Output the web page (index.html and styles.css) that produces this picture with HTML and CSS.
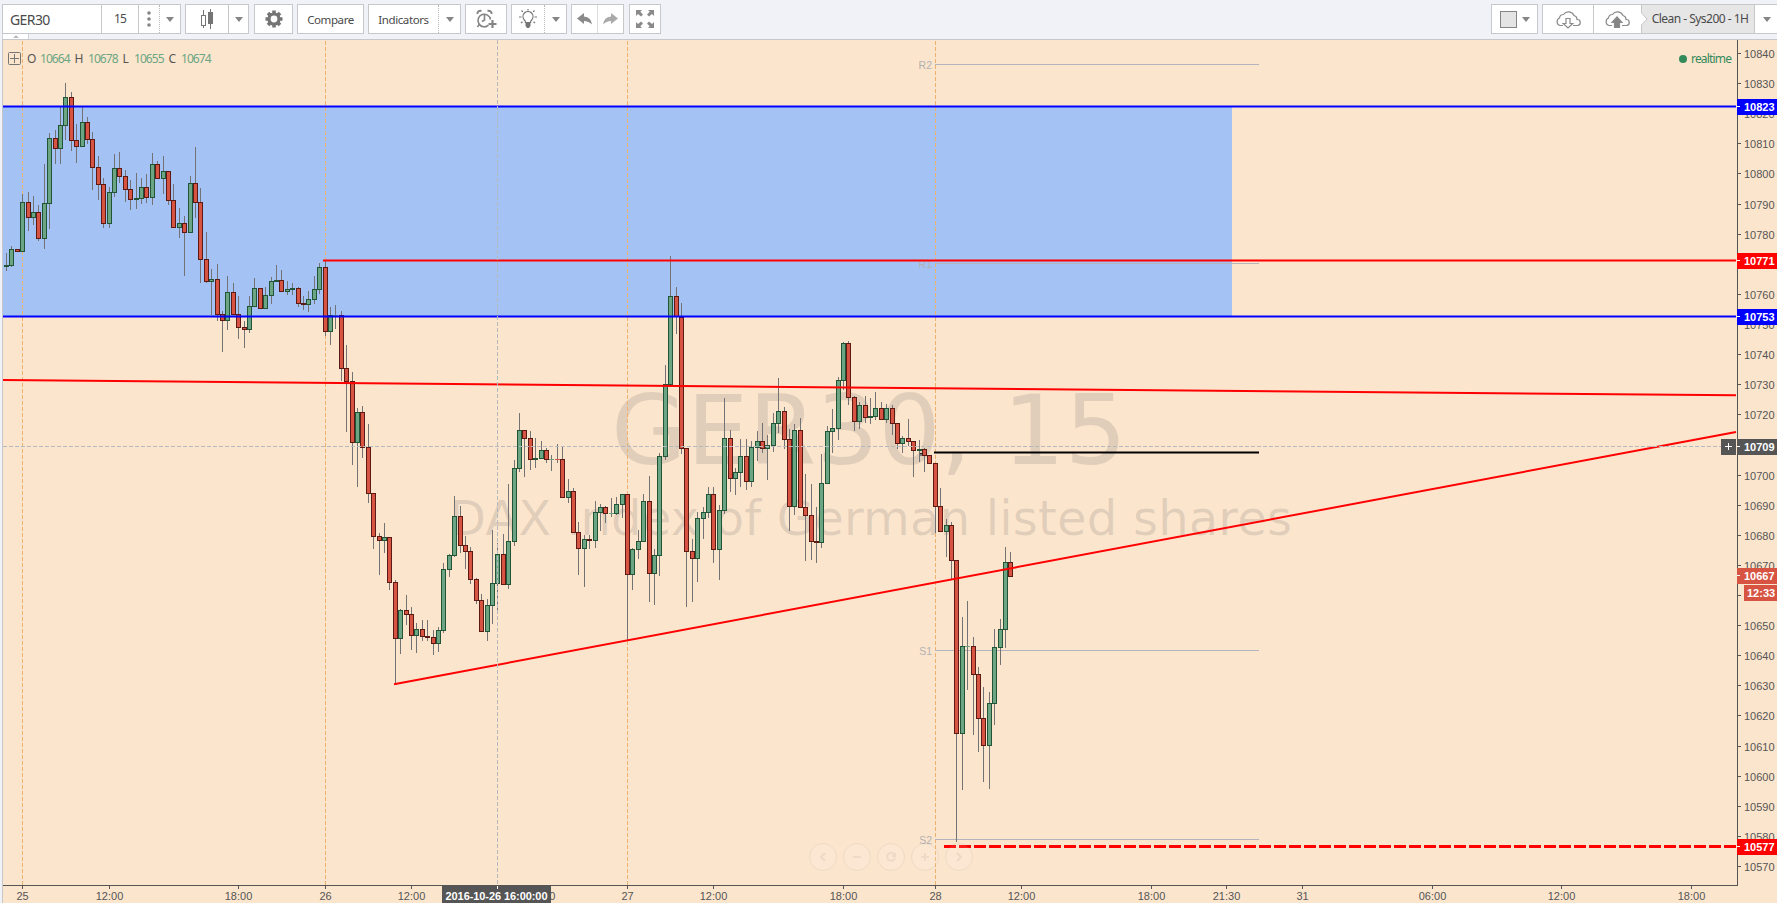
FILE: index.html
```html
<!DOCTYPE html>
<html lang="en">
<head>
<meta charset="utf-8">
<title>GER30, 15</title>
<link rel="stylesheet" href="styles.css">
</head>
<body>
<div class="app">
  <header class="toolbar">
    <div class="group">
      <div class="cell symbol">GER30</div>
      <div class="cell interval sep">15</div>
      <div class="cell dots sep"><svg width="4" height="16"><circle cx="2" cy="2" r="1.8"/><circle cx="2" cy="8" r="1.8"/><circle cx="2" cy="14" r="1.8"/></svg></div>
      <div class="cell drop dotted"><i class="caret"></i></div>
    </div>
    <div class="group style">
      <div class="cell grow"><svg width="14" height="20"><path d="M3.500 1v18M10.500 0v20" stroke="#757575"/><rect x="1.500" y="6.500" width="4" height="10" fill="#fff" stroke="#757575"/><rect x="8" y="3" width="5" height="12" fill="#757575"/></svg></div>
      <div class="cell drop sep"><i class="caret"></i></div>
    </div>
    <div class="group gear"><div class="cell grow"><svg width="18" height="18" viewBox="-9 -9 18 18"><circle r="5" fill="none" stroke="#757575" stroke-width="3.200"/><g fill="#757575"><path id="tooth" d="M-1.800-8.500h3.600v3h-3.600zM-1.800 5.500h3.600v3h-3.600zM-8.500-1.800h3v3.600h-3zM5.500-1.800h3v3.600h-3z"/><use href="#tooth" transform="rotate(45)"/></g></svg></div></div>
    <div class="group compare"><div class="cell grow label">Compare</div></div>
    <div class="group indicators"><div class="cell grow label">Indicators</div><div class="cell drop dotted"><i class="caret"></i></div></div>
    <div class="group alarm"><div class="cell grow"><svg width="21" height="20" fill="none" stroke="#858585" stroke-width="1.600"><path d="M12.500 16.200A6.300 6.300 0 1 1 14.500 10.500M8.500 6v5l-2.500 1.500M3.500 15l-2 3"/><path d="M1.500 5Q1 1.500 5.500 1.700M15.500 5Q16 1.500 11.500 1.700" stroke-width="2"/><path d="M16.500 11v8M12.500 15h8" stroke-width="2.200"/></svg></div></div>
    <div class="group bulb"><div class="cell grow"><svg width="18" height="20" fill="none" stroke="#757575" stroke-width="1.200"><path d="M6.500 13.500Q6.500 12 5 10.500A5 5 0 1 1 13 10.500Q11.500 12 11.500 13.500Z"/><path d="M6.500 14h5v3l-1.500 2h-2l-1.500-2z" fill="#757575" stroke="none"/><path d="M9 0v1.500M2.500 1.500l1.300 1.300M15.500 1.500l-1.300 1.300M0 8h2.500M15.500 8H18M2 14l1.500-1.300M16 14l-1.500-1.300"/></svg></div><div class="cell drop dotted"><i class="caret"></i></div></div>
    <div class="group history">
      <div class="cell grow"><svg width="15" height="12" fill="#8a8a8a"><path d="M0 5.500L7 0v3.500q7 .5 8 8-3.500-3.500-8-3.500v3z"/></svg></div>
      <div class="cell grow sep light"><svg width="15" height="12" fill="#aaa"><path d="M15 5.500L8 0v3.500q-7 .5-8 8 3.500-3.500 8-3.500v3z"/></svg></div>
    </div>
    <div class="group full"><div class="cell grow"><svg width="18" height="18" viewBox="0 0 18 18"><g fill="#8a8a8a"><path id="corner" d="M0 0h6L4.300 1.700 7 4.500 5 6.500 2 3.900 0 6z"/><use href="#corner" transform="matrix(-1 0 0 1 18 0)"/><use href="#corner" transform="matrix(1 0 0 -1 0 18)"/><use href="#corner" transform="rotate(180 9 9)"/></g></svg></div></div>
    <div class="spacer"></div>
    <div class="group layout"><div class="cell grow"><i class="swatch"></i><i class="caret"></i></div></div>
    <div class="group cloud">
      <div class="cell load"><svg width="27" height="19" fill="none" stroke="#8a8a8a" stroke-width="1.200"><path d="M8 15.500H5A4 4 0 0 1 4.500 8 4 4 0 0 1 8.500 4.500 6 6 0 0 1 19 5.500 4 4 0 0 1 22 9.500 3 3 0 0 1 22.500 15.500H18"/><path d="M11 8.500h4v5h2.800L13 18 8.200 13.500H11z"/></svg></div>
      <div class="cell save sep"><svg width="27" height="19" fill="none" stroke="#8a8a8a" stroke-width="1.200"><path d="M8 15.500H5A4 4 0 0 1 4.500 8 4 4 0 0 1 8.500 4.500 6 6 0 0 1 19 5.500 4 4 0 0 1 22 9.500 3 3 0 0 1 22.500 15.500H18"/><path d="M10.500 17.500v-5H8l5-5.500 5 5.500h-2.500v5z" fill="#858585"/></svg></div>
      <div class="cell name"><svg class="notch" width="7" height="28"><path d="M0 7.500L6 14 0 20.500" fill="#fff" stroke="#c6c8cb"/></svg><span>Clean - Sys200 - 1H</span></div>
      <div class="cell last sep"><i class="caret"></i></div>
    </div>
  </header>
  <div class="tab"><i></i></div>
  <main class="pane">
    <svg id="chart" width="1777" height="864" viewBox="0 39 1777 864"></svg>
  </main>
</div>
<script src="chart.js"></script>
</body>
</html>
```
FILE: styles.css
```css
* { box-sizing: border-box; }
body { margin: 0; width: 1777px; height: 903px; overflow: hidden; background: #f0f2f7; font-family: "Noto Sans", "Open Sans", sans-serif; color: #4a4a4a; }
.app { position: relative; display: flex; flex-direction: column; width: 1777px; height: 903px; }
.toolbar { display: flex; height: 39px; padding: 4px 0 5px 2px; font-size: 12px; flex: none; }
.group { display: flex; height: 30px; background: #fff; border: 1px solid #c6c8cb; margin-right: 4px; flex: none; }
.group:first-child { width: 179px; }
.cell { display: flex; align-items: center; justify-content: center; flex: none; }
.grow { flex: 1; }
.label { font-size: 11.5px; letter-spacing: -0.4px; }
.symbol { width: 98px; justify-content: flex-start; padding-left: 7px; font-size: 14px; letter-spacing: -0.6px; }
.interval { width: 37px; letter-spacing: -0.8px; padding-bottom: 2px; }
.dots { width: 21px; fill: #858585; }
.sep { border-left: 1px solid #c6c8cb; }
.dotted { border-left: 1px dotted #b8b8b8; }
.drop { width: 22px; }
.group:first-child .drop { width: 21px; }
.caret { border: 4.5px solid transparent; border-top: 5px solid #858585; border-bottom: 0; }
.style { width: 64px; margin-right: 5px; }
.style .drop { width: 20px; }
.gear { width: 39px; }
.compare { width: 67px; }
.indicators { width: 93px; }
.alarm { width: 42px; }
.bulb { width: 56px; }
.history { width: 53px; margin-right: 5px; }
.light { border-color: #dcdde0; }
.full { width: 32px; }
.spacer { flex: 1; }
.layout { width: 47px; }
.layout .cell { gap: 5px; }
.swatch { width: 17px; height: 17px; border: 1px solid #858585; background: #e4e4e4; }
.cloud { width: 235px; margin-right: 0; border-right: 0; }
.load { width: 50px; }
.save { width: 48px; }
.name { position: relative; width: 113px; background: #e6e6e6; border-left: 1px solid #c6c8cb; padding-left: 4px; letter-spacing: -0.52px; padding-bottom: 2px; }
.notch { position: absolute; left: -1px; top: 0; }
.last { width: 24px; }
.tab { position: absolute; left: 2px; top: 34px; width: 27px; height: 5px; background: #fff; border: 1px solid #d0d2d5; border-width: 0 1px; display: flex; justify-content: center; }
.tab i { margin-top: 1px; height: 0; border: 3px solid transparent; border-bottom-color: #bbb; border-top: 0; }
.pane { height: 864px; }
#chart { display: block; }
.axis { font: 11px "Liberation Sans", Arial, sans-serif; fill: #555; }
.tag { font-weight: bold; fill: #fff; }
.pivot { font: 10.5px "Liberation Sans", Arial, sans-serif; fill: #b2b2b2; }
.legend { font: 12px "Noto Sans", sans-serif; fill: #555; }
.legend .val { fill: #6ba583; }
.live { font: 12px "Noto Sans", sans-serif; fill: #338a5b; }
.mark { font-family: "DejaVu Sans", sans-serif; fill: #555; fill-opacity: .16; }
```
FILE: chart.js
```js
// Candles: origin x, origin y, then rows of
// centre, high, body top, body bottom, low (thirds of a pixel) and direction.
const U = 1, D = 0;
const sessions = [
[0,70,[[19,548,585,591,603,U],[34,528,537,588,591,U],[52,537,537,546,546,D],[67,372,396,546,546,U],[85,366,396,444,483,D],[100,378,426,444,465,U],[115,405,426,507,513,D],[133,282,399,507,537,U],[148,189,204,402,477,U],[166,180,204,237,282,D],[181,111,165,237,282,U],[196,39,81,168,210,U],[214,66,81,213,243,D],[229,162,210,231,279,D],[247,111,156,231,231,U],[262,141,156,210,222,D],[277,186,207,294,360,D],[295,258,291,345,390,D],[310,324,342,462,474,D],[328,351,366,462,474,U],[343,252,294,369,381,U],[358,246,294,321,339,D],[376,300,318,360,396,D],[391,330,357,390,420,D],[409,309,384,390,417,U],[424,324,351,387,402,U],[439,312,351,384,399,D],[457,249,282,384,405,U],[472,273,282,327,327,D],[490,258,303,327,372,U],[505,303,303,393,405,D],[520,342,390,474,474,D],[538,414,459,474,504,U],[553,438,459,489,618,D],[571,318,339,489,489,U],[586,231,339,399,444,D],[601,354,396,570,639,D],[619,486,567,636,639,D]]],
[170,130,[[124,417,447,456,555,U],[142,402,447,555,573,D],[157,543,552,573,666,D],[172,438,486,573,600,U],[190,459,486,555,555,D],[205,498,552,594,627,D],[223,573,591,600,654,D],[238,498,528,600,609,U],[253,444,474,531,531,U],[271,474,474,537,537,D],[286,471,495,537,537,U],[304,441,453,498,522,U],[319,405,450,456,456,U],[334,420,450,486,486,D],[352,453,477,486,495,U],[367,459,474,480,495,U],[385,471,474,522,531,D],[400,498,519,525,540,D],[415,483,507,525,546,U],[433,438,477,510,522,U],[448,399,411,480,492,U],[466,393,411,606,618,D],[481,531,555,606,645,U],[496,525,555,558,597,U],[514,543,555,717,753,D],[529,645,714,756,906,D]]],
[320,300,[[97,216,243,429,495,D],[112,324,336,429,561,U],[127,318,336,444,474,D],[145,372,441,582,609,D],[160,579,579,711,747,D],[178,699,708,723,825,D],[193,669,711,723,759,U],[208,711,711,849,870,D],[226,840,846,1017,1152,D],[241,927,930,1017,1062,U],[259,885,930,945,975,D],[274,921,942,1008,1050,D],[289,969,987,1008,1059,U],[307,960,987,1011,1023,D],[322,960,1008,1014,1023,D],[340,990,1011,1032,1065,D],[355,981,990,1032,1056,U],[370,789,807,993,999,U],[388,762,765,810,831,U],[403,588,648,768,771,U],[421,618,648,738,759,D],[436,708,735,756,807,D],[451,741,753,840,852,D],[469,834,837,903,912,D],[484,882,900,996,996,D],[502,897,915,996,1023,U],[517,690,849,918,972,U],[532,730,762,852,933,U],[550,702,762,855,855,D],[565,552,723,855,867,U],[583,480,504,726,738,U]]],
[480,390,[[118,69,120,237,246,U],[133,120,120,147,261,D],[151,123,144,210,240,D],[166,144,204,210,234,U],[184,153,180,207,207,U],[199,174,180,210,219,D],[214,195,207,210,243,U],[232,162,207,210,219,D],[247,168,207,324,324,D],[265,267,303,324,339,U],[280,294,303,429,429,D],[295,396,426,477,555,D],[313,435,447,477,591,U],[328,435,447,453,477,D],[346,333,366,453,474,U],[361,342,351,369,423,U],[376,348,351,372,399,D],[394,324,369,372,381,U],[409,321,342,372,375,U],[427,312,312,345,384,U],[442,312,312,555,750,D],[457,474,477,555,600,U],[475,420,453,480,507,U],[490,312,333,456,456,U],[508,258,333,552,636,D],[523,477,495,552,645,U],[538,189,198,498,558,U]]],
[620,240,[[136,375,432,651,660,U],[151,48,168,435,438,U],[169,141,168,231,282,D],[184,189,231,627,642,D],[199,624,624,936,1101,D],[217,897,933,957,1086,D],[232,816,834,957,1026,U],[250,801,816,837,897,U],[265,741,762,819,834,U],[280,741,762,930,969,D],[298,795,810,930,1020,U],[313,474,594,813,822,U],[331,570,594,717,756,D],[346,684,696,717,765,U],[361,597,648,699,741,U],[379,597,648,726,750,D],[394,603,621,726,741,U],[412,573,603,624,663,U],[427,549,603,627,639,D],[442,585,615,627,720,U],[460,519,549,618,636,U],[475,414,513,552,579,U],[493,501,513,600,627,D],[508,567,597,801,873,D],[523,552,570,801,825,U],[541,534,570,804,804,D],[556,702,801,828,963,D],[574,732,825,906,960,D],[589,801,903,909,969,D],[604,642,729,909,924,U],[622,558,573,732,732,U],[637,507,564,576,639,U]]],
[790,320,[[145,171,180,327,360,U],[160,66,69,183,210,U],[175,63,69,234,255,D],[193,228,231,306,333,D],[208,246,255,306,327,U],[226,228,255,294,309,D],[241,234,288,294,312,U],[256,216,264,291,300,U],[274,246,264,300,300,D],[289,252,264,300,309,U],[307,255,264,312,345,D],[322,309,309,372,387,D],[337,348,354,372,399,U],[355,297,354,366,378,D],[370,363,363,393,471,D],[388,360,387,393,426,U],[403,384,387,408,456,D],[418,405,405,432,432,D],[436,429,429,561,639,D],[451,504,558,636,636,D],[469,597,615,636,711,U]]],
[900,430,[[154,276,285,393,447,D],[169,390,390,912,1236,D],[187,561,648,912,1080,U],[202,513,648,651,780,U],[220,621,648,735,915,D],[235,711,732,867,966,D],[250,771,864,948,1056,D],[268,786,819,948,1077,U],[283,597,651,822,885,U],[301,567,597,654,705,U],[316,351,396,600,654,U],[331,366,396,441,441,D]]]
];
const out = [];
const rect = (x, y, w, h, fill, extra = '') => out.push(`<rect x="${x}" y="${y}" width="${w}" height="${h}" fill="${fill}" ${extra}/>`);
const line = (x1, y1, x2, y2, c, w = 1, extra = '') => out.push(`<line x1="${x1}" y1="${y1}" x2="${x2}" y2="${y2}" stroke="${c}" stroke-width="${w}" ${extra}/>`);
const text = (x, y, cls, s, extra = '') => out.push(`<text x="${x}" y="${y}" class="${cls}" ${extra}>${s}</text>`);

rect(0, 39, 1777, 864, '#fce5cd');
rect(0, 39, 2, 864, '#f0f2f7');
rect(2, 39, 1, 864, '#c6c8cb');
rect(2, 39, 1775, 1, '#c6c8cb');

text(869, 464, 'mark', 'GER30, 15', 'font-size="96" text-anchor="middle" textLength="516" lengthAdjust="spacingAndGlyphs"');
text(870.5, 535, 'mark', 'DAX index of German listed shares', 'font-size="48" text-anchor="middle" textLength="843"');

rect(3, 106, 1229, 210, '#a4c2f4');
for (const x of [22.5, 325.5, 627.5, 935.5]) line(x, 41, x, 885, '#efb26e', 1, 'stroke-dasharray="4 2"');

// Pivot levels
for (const [n, y] of [['R2', 64.5], ['R1', 263.5], ['S1', 650.5], ['S2', 839.5]]) {
  line(935, y, 1259, y, '#b2b5be');
  text(932, y + 4, 'pivot', n, 'text-anchor="end"');
}
// Candles
for (const [ox, oy, rows] of sessions) for (const [c, hi, top, bot, lo, up] of rows) {
  const x = ox + Math.floor(c / 3), px = v => oy + Math.round(v / 3);
  const t = px(top), h = px(bot) - t;
  rect(x, px(hi), 1, px(lo) - px(hi), '#737375');
  const edge = up ? '#225437' : '#5b1a13', body = up ? '#6ba583' : '#d75442';
  rect(x - 2, t, 5, h, h === 1 ? body : edge);
  if (h > 2) rect(x - 1, t + 1, 3, h - 2, body);
}
rect(920, 453, 2, 3, '#777');
rect(920, 453, 3, 1, '#222');

// Drawings
line(3, 106.5, 1736, 106.5, '#00f', 2);
line(3, 316.5, 1736, 316.5, '#00f', 2);
line(323, 260.5, 1736, 260.5, '#f00', 2);
line(3, 380, 1736, 395.3, '#f00', 2);
line(394, 684.2, 1736, 432, '#f00', 2);
line(934, 452.5, 1259, 452.5, '#000', 2);
line(944, 846.5, 1736, 846.5, '#f00', 3, 'stroke-dasharray="12 3"');
// Crosshair
line(497.5, 40, 497.5, 885, '#b4b8bf', 1, 'stroke-dasharray="4 2"');
line(3, 446.5, 1736, 446.5, '#b4b8bf', 1, 'stroke-dasharray="4 2"');

// Navigation buttons
const icons = ['M2-4L-2 0 2 4', 'M-4 0H4', 'M3.500-2.500A4 4 0 1 0 4 1M4-4v3H1', 'M-4 0H4M0-4V4', 'M-2-4L2 0-2 4'];
icons.forEach((d, i) => out.push(`<g transform="translate(${823 + i * 34} 857)" fill="none" stroke="#555" stroke-opacity=".09"><circle r="13.5" fill="#fff" fill-opacity=".1"/><path d="${d}" stroke-width="2"/></g>`));

// Price scale
rect(1737, 40, 1, 846, '#555');
rect(3, 885, 1735, 1, '#555');
for (let p = 10840, i = 0; p >= 10570; p -= 10, i++) {
  const y = Math.round(53 + i * 30.11);
  rect(1738, y, 3, 1, '#555');
  if (p !== 10660) text(1744, y + 5, 'axis', p);
}
const tag = (y, s, c) => { rect(1737, y - 8, 40, 16, c); rect(1737, y - 1, 3, 1, '#fff'); text(1744, y + 4, 'axis tag', s); };
tag(107, '10823', '#00f');
tag(261, '10771', '#f00');
tag(317, '10753', '#00f');
tag(447, '10709', '#555');
tag(576, '10667', '#d75442');
tag(847, '10577', '#f00');
rect(1744, 585, 33, 16, '#d75442');
text(1747, 597, 'axis tag', '12:33');
rect(1721, 439, 15, 16, '#555');
rect(1725, 446, 7, 1, '#fff');
rect(1728, 443, 1, 7, '#fff');

// Time scale
for (const [x, s] of [[22,'25'],[109,'12:00'],[238,'18:00'],[325,'26'],[411,'12:00'],[541,'18:00'],[627,'27'],[713,'12:00'],[843,'18:00'],[935,'28'],[1021,'12:00'],[1151,'18:00'],[1226,'21:30'],[1302,'31'],[1432,'06:00'],[1561,'12:00'],[1691,'18:00']]) {
  rect(x, 886, 1, 3, '#555');
  text(x + 0.5, 900, 'axis', s, 'text-anchor="middle"');
}
rect(442, 886, 109, 17, '#555');
rect(497, 886, 1, 3, '#fff');
text(496.5, 900, 'axis tag', '2016-10-26 16:00:00', 'text-anchor="middle" textLength="102"');

// Legend
out.push('<g fill="none" stroke="#757575"><rect x="8.500" y="52.500" width="12" height="12" rx="1"/><path d="M10 58.500h9M14.500 54v9"/></g>');
[['O', 27, 40], ['H', 74.5, 88], ['L', 122.5, 134], ['C', 168.5, 181]].forEach(([k, a, b], i) => {
  text(a, 63, 'legend', k);
  out.push(`<text x="${b}" y="63" class="legend" textLength="30.5"><tspan class="val">${[10664, 10678, 10655, 10674][i]}</tspan></text>`);
});
out.push('<circle cx="1683" cy="59" r="4" fill="#338a5b"/>');
text(1691, 62.5, 'live', 'realtime', 'textLength="41"');
document.getElementById('chart').innerHTML = out.join('');
```
